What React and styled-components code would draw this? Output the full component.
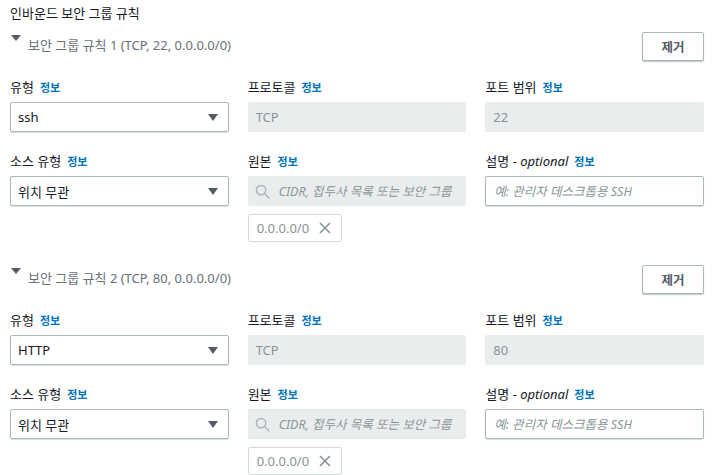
import styled, { createGlobalStyle } from 'styled-components';

const GlobalStyle = createGlobalStyle`
  body {
    margin: 0;
    background: #fff;
    font-family: "Noto Sans", "Noto Sans CJK KR", sans-serif;
    color: #16191f;
  }
`;

const Page = styled.div`
  padding: 4px 16px 0 10px;
  width: 720px;
  height: 475px;
  box-sizing: border-box;
  overflow: hidden;
`;

const Title = styled.div`
  font-size: 13px;
  line-height: 18px;
  height: 18px;
  color: #16191f;
`;

const RuleList = styled.div`
  display: flex;
  flex-direction: column;
  gap: 23px;
  margin-top: 10px;
`;

const RuleHeader = styled.div`
  display: flex;
  justify-content: space-between;
  align-items: center;
  height: 29px;
  margin-bottom: 17px;
`;

const Toggle = styled.div`
  display: flex;
  align-items: center;
  height: 100%;
  gap: 7px;
`;

const ToggleCaret = styled.svg`
  align-self: flex-start;
  margin-top: 3px;
  margin-left: 1px;
`;

const RuleName = styled.span`
  font-size: 13px;
  line-height: 18px;
  color: #687078;
  padding-bottom: 3px;
`;

const RemoveButton = styled.button`
  width: 62px;
  height: 29px;
  box-sizing: border-box;
  background: #fff;
  border: 1px solid #aab7b8;
  border-radius: 2px;
  box-shadow: 0 1px 1px rgba(0, 28, 36, 0.25);
  font-family: inherit;
  font-size: 12.5px;
  font-weight: 700;
  color: #545b64;
  padding: 0;
`;

const FieldGrid = styled.div`
  display: grid;
  grid-template-columns: repeat(3, 1fr);
  column-gap: 19px;
  row-gap: 20px;
`;

const Field = styled.div`
  display: flex;
  flex-direction: column;
  align-items: flex-start;
`;

const Label = styled.div`
  font-size: 13px;
  line-height: 18px;
  height: 18px;
  margin-bottom: 6px;
  color: #16191f;
  white-space: nowrap;
`;

const Em = styled.i`
  font-style: italic;
`;

const Info = styled.span`
  font-size: 11px;
  line-height: 18px;
  font-weight: 700;
  color: #0073bb;
  margin-left: 6px;
`;

const Box = styled.div`
  width: 100%;
  height: 30px;
  box-sizing: border-box;
  border-radius: 2px;
  display: flex;
  align-items: center;
  font-size: 13px;
`;

const Select = styled(Box)`
  border: 1px solid #aab7b8;
  box-shadow: 0 1px 1px rgba(0, 28, 36, 0.15);
  padding: 0 10px 0 7px;
  justify-content: space-between;
  color: #16191f;
`;

const Disabled = styled(Box)`
  background: #eaeded;
  color: #879596;
  padding: 0 8px;
`;

const Search = styled(Box)`
  background: #eaeded;
  padding: 0 9px 0 7px;
  gap: 9px;
`;

const SearchText = styled.input`
  flex: 1;
  min-width: 0;
  border: none;
  background: transparent;
  padding: 0;
  outline: none;
  font-family: inherit;
  font-size: 12.5px;
  font-style: italic;
  &::placeholder {
    color: #879596;
  }
`;

const TextInput = styled.input`
  width: 100%;
  height: 30px;
  box-sizing: border-box;
  border: 1px solid #aab7b8;
  border-radius: 2px;
  box-shadow: 0 1px 1px rgba(0, 28, 36, 0.15);
  padding: 0 8px;
  font-family: inherit;
  font-size: 12.5px;
  font-style: italic;
  outline: none;
  &::placeholder {
    color: #879596;
  }
`;

const Token = styled.div`
  margin-top: 8px;
  height: 28px;
  box-sizing: border-box;
  display: inline-flex;
  align-items: center;
  gap: 10px;
  padding: 0 10px 0 8px;
  border: 1px solid #d5dbdb;
  border-radius: 2px;
  font-size: 13px;
  color: #879596;
`;

const Caret = () => (
  <svg width="10" height="7" viewBox="0 0 10 7">
    <path d="M0 0 H10 L5 7 Z" fill="#545b64" />
  </svg>
);

const SearchIcon = () => (
  <svg width="15" height="15" viewBox="0 0 16 16" fill="none" stroke="#aab7b8" strokeWidth="1.6">
    <circle cx="6.5" cy="6.5" r="5" />
    <path d="M10.2 10.2 L15 15" strokeLinecap="round" />
  </svg>
);

const CloseIcon = () => (
  <svg width="12" height="12" viewBox="0 0 12 12" fill="none" stroke="#879596" strokeWidth="1.6">
    <path d="M1 1 L11 11 M11 1 L1 11" />
  </svg>
);

const rules = [
  { n: 1, type: 'ssh', port: '22' },
  { n: 2, type: 'HTTP', port: '80' },
];

const Rule = ({ rule }) => (
  <div>
    <RuleHeader>
      <Toggle>
        <ToggleCaret width="10" height="6" viewBox="0 0 10 6">
          <path d="M0 0 H10 L5 6 Z" fill="#545b64" />
        </ToggleCaret>
        <RuleName>보안 그룹 규칙 {rule.n} (TCP, {rule.port}, 0.0.0.0/0)</RuleName>
      </Toggle>
      <RemoveButton>제거</RemoveButton>
    </RuleHeader>
    <FieldGrid>
      <Field>
        <Label>유형<Info>정보</Info></Label>
        <Select>{rule.type}<Caret /></Select>
      </Field>
      <Field>
        <Label>프로토콜<Info>정보</Info></Label>
        <Disabled>TCP</Disabled>
      </Field>
      <Field>
        <Label>포트 범위<Info>정보</Info></Label>
        <Disabled>{rule.port}</Disabled>
      </Field>
      <Field>
        <Label>소스 유형<Info>정보</Info></Label>
        <Select>위치 무관<Caret /></Select>
      </Field>
      <Field>
        <Label>원본<Info>정보</Info></Label>
        <Search>
          <SearchIcon />
          <SearchText placeholder="CIDR, 접두사 목록 또는 보안 그룹" />
        </Search>
        <Token>0.0.0.0/0<CloseIcon /></Token>
      </Field>
      <Field>
        <Label>설명 - <Em>optional</Em><Info>정보</Info></Label>
        <TextInput placeholder="예: 관리자 데스크톱용 SSH" />
      </Field>
    </FieldGrid>
  </div>
);

const App = () => (
  <>
    <GlobalStyle />
    <Page>
      <Title>인바운드 보안 그룹 규칙</Title>
      <RuleList>
        {rules.map((rule) => (
          <Rule key={rule.n} rule={rule} />
        ))}
      </RuleList>
    </Page>
  </>
);

export default App;
